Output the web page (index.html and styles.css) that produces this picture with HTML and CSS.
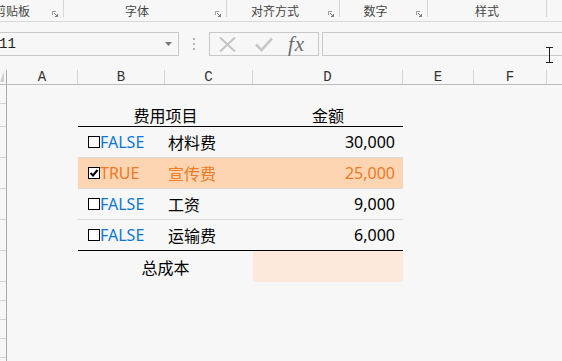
FILE: index.html
```html
<!DOCTYPE html>
<html lang="zh-CN">
<head>
<meta charset="utf-8">
<title>费用表</title>
<link rel="stylesheet" href="styles.css">
</head>
<body>
<div class="app">
  <div class="ribbon">
    <div class="grp g1"><span class="lbl">剪贴板</span><span class="launch"><svg width="6" height="6" viewBox="0 0 6 6"><path d="M0.5 4V0.5H4" fill="none" stroke="#9a9a9a"/><path d="M2 2L5.5 5.5M5.5 3V5.5H3" fill="none" stroke="#7a7a7a"/></svg></span></div>
    <div class="grp g2"><span class="lbl">字体</span><span class="launch"><svg width="6" height="6" viewBox="0 0 6 6"><path d="M0.5 4V0.5H4" fill="none" stroke="#9a9a9a"/><path d="M2 2L5.5 5.5M5.5 3V5.5H3" fill="none" stroke="#7a7a7a"/></svg></span></div>
    <div class="grp g3"><span class="lbl">对齐方式</span><span class="launch"><svg width="6" height="6" viewBox="0 0 6 6"><path d="M0.5 4V0.5H4" fill="none" stroke="#9a9a9a"/><path d="M2 2L5.5 5.5M5.5 3V5.5H3" fill="none" stroke="#7a7a7a"/></svg></span></div>
    <div class="grp g4"><span class="lbl">数字</span><span class="launch"><svg width="6" height="6" viewBox="0 0 6 6"><path d="M0.5 4V0.5H4" fill="none" stroke="#9a9a9a"/><path d="M2 2L5.5 5.5M5.5 3V5.5H3" fill="none" stroke="#7a7a7a"/></svg></span></div>
    <div class="grp g5"><span class="lbl">样式</span></div>
  </div>

  <div class="fbar">
    <div class="namebox"><span class="nb-text">11</span><svg class="dd" width="7" height="4" viewBox="0 0 7 4"><path d="M0 0H7L3.5 4Z" fill="#7a7a7a"/></svg></div>
    <div class="dots"><i></i><i></i><i></i></div>
    <div class="fxbox">
      <svg class="ico-x" width="17" height="15" viewBox="0 0 17 15"><path d="M1 0.5L16 14.5M16 0.5L1 14.5" stroke="#c4c4c4" stroke-width="2" fill="none"/></svg>
      <svg class="ico-ok" width="18" height="15" viewBox="0 0 18 15"><path d="M1 7.5L6.5 13L17 1.5" stroke="#c8c8c8" stroke-width="2.6" fill="none"/></svg>
      <span class="fx">fx</span>
    </div>
    <div class="finput"></div>
  </div>

  <div class="colhead">
    <div class="ch corner"><span class="tri"></span></div>
    <div class="ch">A</div>
    <div class="ch">B</div>
    <div class="ch">C</div>
    <div class="ch">D</div>
    <div class="ch">E</div>
    <div class="ch">F</div>
    <div class="ch last"></div>
  </div>

  <div class="sheet">
    <div class="rowhead">
      <div class="rh h19"></div>
      <div class="rh h23"></div>
      <div class="rh h31"></div>
      <div class="rh h31"></div>
      <div class="rh h31"></div>
      <div class="rh h31"></div>
      <div class="rh h31"></div>
      <div class="rh h19"></div>
      <div class="rh h19"></div>
      <div class="rh h19"></div>
      <div class="rh h19"></div>
      <div class="rh h19"></div>
    </div>
    <div class="cells">
      <div class="tbl">
        <div class="c head span2">费用项目</div>
        <div class="c head">金额</div>

        <div class="c chk"><span class="box"></span><span class="false">FALSE</span></div>
        <div class="c name">材料费</div>
        <div class="c amt">30,000</div>

        <div class="c chk on"><span class="box"><svg width="10" height="10" viewBox="0 0 10 10"><path d="M1.5 5L4 7.5L8.5 2" stroke="#000" stroke-width="2" fill="none"/></svg></span><span class="true">TRUE</span></div>
        <div class="c name on">宣传费</div>
        <div class="c amt on">25,000</div>

        <div class="c chk"><span class="box"></span><span class="false">FALSE</span></div>
        <div class="c name">工资</div>
        <div class="c amt">9,000</div>

        <div class="c chk last"><span class="box"></span><span class="false">FALSE</span></div>
        <div class="c name last">运输费</div>
        <div class="c amt last">6,000</div>

        <div class="c total span2">总成本</div>
        <div class="c total-amt"></div>
      </div>
    </div>
  </div>

  <svg class="ibeam" width="7" height="16" viewBox="0 0 7 16"><path d="M0 0.5H7M0 15.5H7M3.5 0.5V15.5" stroke="#1e1e1e" stroke-width="1" fill="none"/></svg>
</div>
</body>
</html>
```

FILE: styles.css
```css
* { box-sizing: border-box; }
html, body { margin: 0; padding: 0; }
body {
  background: #f7f7f7;
  width: 562px;
  height: 361px;
  overflow: hidden;
  font-family: "Noto Sans", "Noto Sans CJK SC", sans-serif;
  color: #000;
}
.app {
  position: relative;
  width: 562px;
  height: 361px;
  overflow: hidden;
}

/* ribbon group labels */
.ribbon {
  display: flex;
  height: 22px;
  margin-left: -23px;
  border-bottom: 1px solid #d9d9d9;
}
.grp {
  display: flex;
  height: 17px;
  border-right: 1px solid #d6d6d6;
  font-family: "Noto Sans CJK SC", sans-serif;
  font-size: 12px;
  color: #454545;
  flex: none;
}
.grp .lbl {
  flex: 1;
  text-align: center;
  padding-top: 4px;
  line-height: 13px;
  white-space: nowrap;
}
.grp .launch {
  width: 16px;
  padding: 11px 0 0 5px;
  display: flex;
  align-items: flex-start;
}
.g1 { width: 87px; }
.g2 { width: 163px; }
.g3 { width: 113px; }
.g4 { width: 88px; }
.g5 { width: 119px; }

/* formula bar */
.fbar {
  display: flex;
  height: 24px;
  margin-top: 10px;
}
.namebox {
  width: 179px;
  border: 1px solid #c8c8c8;
  border-left: none;
  display: flex;
  align-items: center;
  justify-content: space-between;
  padding-right: 6px;
  font-family: "Liberation Mono", monospace;
  font-size: 14px;
  color: #222;
}
.nb-text { margin-left: -1px; }
.dots {
  width: 30px;
  display: flex;
  flex-direction: column;
  align-items: center;
  justify-content: center;
  gap: 3px;
}
.dots i {
  display: block;
  width: 2px;
  height: 2px;
  background: #b4b4b4;
}
.fxbox {
  width: 110px;
  border: 1px solid #c8c8c8;
  display: flex;
  align-items: center;
}
.ico-x { margin-left: 9px; }
.ico-ok { margin-left: 19px; }
.fx {
  margin-left: 15px;
  font-family: "Liberation Serif", serif;
  font-style: italic;
  font-size: 21px;
  letter-spacing: 1px;
  color: #6e6e6e;
  line-height: 20px;
}
.finput {
  flex: 1;
  margin-left: 3px;
  border: 1px solid #c8c8c8;
  border-right: none;
}

/* column headers */
.colhead {
  display: grid;
  grid-template-columns: 7px 71px 87px 88px 150px 71px 73px 1fr;
  height: 29px;
  padding-top: 14px;
  border-bottom: 1px solid #bdbdbd;
  font-family: "Liberation Mono", monospace;
  font-size: 14px;
  color: #333;
}
.ch {
  border-right: 1px solid #d5d5d5;
  text-align: center;
  line-height: 14px;
}
.ch.corner {
  border-right: 1px solid #a9a9a9;
  position: relative;
  overflow: hidden;
}
.ch.last { border-right: none; }
.tri {
  position: absolute;
  left: 0;
  top: 1px;
  width: 4px;
  height: 11px;
  background: #cfcfcf;
  clip-path: polygon(100% 0, 100% 100%, 0 100%);
}

/* sheet */
.sheet {
  display: flex;
}
.rowhead {
  width: 7px;
  flex: none;
  display: flex;
  flex-direction: column;
  border-right: 1px solid #a9a9a9;
}
.rh { border-bottom: 1px solid #d3d3d3; }
.h19 { height: 19px; }
.h23 { height: 23px; }
.h31 { height: 31px; }

.cells {
  flex: 1;
  display: grid;
  grid-template-columns: 71px 87px 88px 150px 71px 73px 1fr;
  grid-template-rows: 19px 23px repeat(5, 31px) repeat(5, 19px);
}
.tbl {
  grid-column: 2 / 5;
  grid-row: 2 / 8;
  display: grid;
  grid-template-columns: 87px 88px 150px;
  grid-template-rows: 23px repeat(5, 31px);
}
.c {
  display: flex;
  align-items: center;
  font-size: 16px;
  border-bottom: 1px solid #dadada;
  white-space: nowrap;
}
.c.head {
  justify-content: center;
  border-bottom: 1px solid #000;
}
.span2 { grid-column: span 2; }
.c.last { border-bottom: 1px solid #000; }
.c.chk { padding-left: 10px; }
.box {
  width: 12px;
  height: 12px;
  border: 1px solid #000;
  background: #fff;
  flex: none;
  display: flex;
  align-items: center;
  justify-content: center;
}
.false { color: #0a78d2; }
.true { color: #ee7a24; }
.c.name { padding-left: 3px; }
.c.amt {
  justify-content: flex-end;
  padding-right: 8px;
}
.c.on {
  background: #fdd5b3;
  color: #ee7a24;
}
.c.total {
  justify-content: center;
  border-bottom: none;
}
.c.total-amt {
  background: #fde9dc;
  border-bottom: none;
}

/* text cursor overlay */
.ibeam {
  position: absolute;
  left: 546px;
  top: 47px;
}
```
